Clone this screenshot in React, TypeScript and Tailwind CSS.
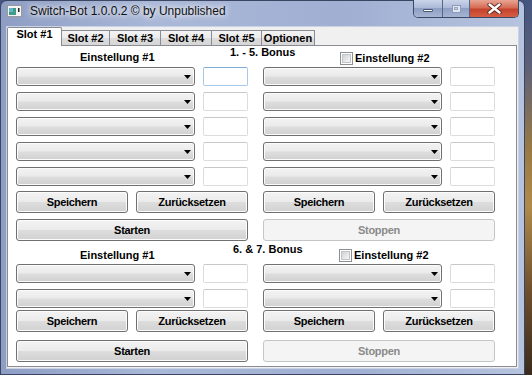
import React from "react";

const F = "font-['Liberation_Sans',Arial,sans-serif]";

function AppIcon() {
  return (
    <svg width="15" height="12" viewBox="0 0 15 12" className="ml-[6px] mt-[4px] shrink-0">
      <rect x="0.5" y="0.5" width="14" height="11" fill="#f4f4f4" stroke="#9a9a9a" />
      <rect x="2" y="3" width="7" height="7" fill="#3f9a8a" />
      <rect x="2" y="3" width="4" height="4" fill="#5fb9c4" />
      <rect x="11" y="3" width="1.5" height="4" fill="#222" />
    </svg>
  );
}

function CaptionButtons() {
  return (
    <div className="-mt-px ml-auto mr-[5px] flex h-[18px] overflow-hidden rounded-b-[5px] border border-t-0 border-[#3b4868]">
      <div className="flex w-[29px] items-center justify-center border-r border-[#56658a] bg-[linear-gradient(#c9d4e8,#a9b7d6_50%,#8f9fc4_50%,#a7b5d4)]">
        <span className="mt-[3px] h-[3px] w-[10px] rounded-[1px] border border-[#4a5676] bg-white" />
      </div>
      <div className="flex w-[27px] items-center justify-center border-r border-[#56658a] bg-[linear-gradient(#c9d4e8,#a9b7d6_50%,#8f9fc4_50%,#a7b5d4)]">
        <span className="flex h-[8px] w-[9px] items-center justify-center border border-[#8e9bb8] bg-[#dfe5f1]">
          <span className="h-[3px] w-[4px] border border-[#9aa6c0] bg-[#c5cfe3]" />
        </span>
      </div>
      <div className="flex w-[48px] items-center justify-center bg-[linear-gradient(#e8a593,#d66c55_45%,#c4432b_55%,#d65d43)]">
        <svg width="15" height="11" viewBox="0 0 15 11">
          <path d="M2.5 1.5L12.5 9.5M12.5 1.5L2.5 9.5" stroke="#5a2a22" strokeWidth="4.2" strokeLinecap="round" />
          <path d="M2.5 1.5L12.5 9.5M12.5 1.5L2.5 9.5" stroke="#ffffff" strokeWidth="2.4" strokeLinecap="round" />
        </svg>
      </div>
    </div>
  );
}

function Combo() {
  return (
    <div className="flex h-[19px] w-[179px] items-center justify-end rounded-[3px] border border-[#707070] bg-[linear-gradient(#f3f3f3,#ebebeb_45%,#dddddd_55%,#d0d0d0)] pr-[3px] shadow-[inset_0_0_0_1px_#fbfbfb]">
      <svg width="7" height="4" viewBox="0 0 7 4">
        <path d="M0 0H7L3.5 4Z" fill="#000" />
      </svg>
    </div>
  );
}

function Field({ active }: { active?: boolean }) {
  return (
    <div
      className={
        active
          ? "h-[19px] w-[45px] rounded-[2px] border border-[#a9c9ea] border-t-[#7eacd8] bg-white"
          : "h-[19px] w-[45px] rounded-[2px] border border-[#dcdcdc] border-t-[#c8c8c8] bg-white"
      }
    />
  );
}

function Btn({ label, wide, off }: { label: string; wide?: boolean; off?: boolean }) {
  const w = wide ? "w-[232px]" : "w-[112px]";
  return off ? (
    <div className={`${w} flex h-[22px] items-center justify-center rounded-[3px] border border-[#c3c6c9] bg-[#f4f4f4] text-[11px] font-bold tracking-[-0.3px] text-[#8a8a8a]`}>
      {label}
    </div>
  ) : (
    <div className={`${w} flex h-[22px] items-center justify-center rounded-[3px] border border-[#707070] bg-[linear-gradient(#f3f3f3,#ebebeb_48%,#dddddd_52%,#d1d1d1)] text-[11px] font-bold tracking-[-0.3px] text-black shadow-[inset_0_0_0_1px_#fcfcfc]`}>
      {label}
    </div>
  );
}

function Check() {
  return (
    <span className="flex h-[13px] w-[13px] shrink-0 items-center justify-center border border-[#8e8f8f] bg-white">
      <span className="h-[9px] w-[9px] border border-[#c2c5c9] bg-[linear-gradient(135deg,#cfd2d6,#f7f7f7)]" />
    </span>
  );
}

function Rows({ count }: { count: number }) {
  const items = Array.from({ length: count });
  return (
    <div className="grid grid-cols-[232px_232px] gap-x-[15px] gap-y-[6px] pl-[8px]">
      {items.map((_, i) => (
        <React.Fragment key={i}>
          <div className="flex gap-[8px]">
            <Combo />
            <Field active={count === 5 && i === 0} />
          </div>
          <div className="flex gap-[8px]">
            <Combo />
            <Field />
          </div>
        </React.Fragment>
      ))}
    </div>
  );
}

function SaveRow({ className }: { className: string }) {
  return (
    <div className={`grid grid-cols-[232px_232px] gap-x-[15px] pl-[8px] ${className}`}>
      <div className="flex gap-[8px]">
        <Btn label="Speichern" />
        <Btn label="Zurücksetzen" />
      </div>
      <div className="flex gap-[8px]">
        <Btn label="Speichern" />
        <Btn label="Zurücksetzen" />
      </div>
    </div>
  );
}

function StartRow({ className }: { className: string }) {
  return (
    <div className={`grid grid-cols-[232px_232px] gap-x-[15px] pl-[8px] ${className}`}>
      <Btn label="Starten" wide />
      <Btn label="Stoppen" wide off />
    </div>
  );
}

const tabs = [
  { label: "Slot #2", cls: "w-[48px]" },
  { label: "Slot #3", cls: "w-[51px]" },
  { label: "Slot #4", cls: "w-[51px]" },
  { label: "Slot #5", cls: "w-[50px]" },
  { label: "Optionen", cls: "w-[53px]" },
];

export default function App() {
  return (
    <div className={`flex h-[375px] w-[532px] overflow-hidden bg-[linear-gradient(#44557f,#5d6078_18%,#9a7a43_40%,#b08a4a_55%,#6e4e2c_78%,#3b2b1d)] ${F}`}>
      <div className="flex h-[375px] w-[525px] shrink-0 flex-col rounded-t-[7px] border border-[#3a4562] bg-[linear-gradient(90deg,#8e9dc4,#aab8d8_30%,#a0afd2_65%,#b6c3de)]">
        <div className="flex h-[26px] shrink-0 items-start">
          <AppIcon />
          <span className="ml-[8px] mt-[3px] text-[12px] leading-[14px] text-[#111] [text-shadow:0_0_5px_#ffffff,0_0_8px_#ffffff]">
            Switch-Bot 1.0.0.2 © by Unpublished
          </span>
          <CaptionButtons />
        </div>
        <div className="mx-[6px] mb-[6px] flex flex-1 flex-col bg-[#f0f0f0] pb-px pr-px shadow-[0_0_0_1px_#c9d1e3]">
          <div className="flex h-[18px] shrink-0 items-end">
            <div className="relative z-10 -mb-px h-[19px] w-[55px] rounded-t-[2px] border border-b-0 border-[#898c95] bg-white pt-[1px] text-center text-[11px] font-bold leading-[11px] text-black">
              Slot #1
            </div>
            {tabs.map((t) => (
              <div
                key={t.label}
                className={`${t.cls} h-[15px] border-r border-t border-[#898c95] bg-[linear-gradient(#f3f3f3,#ebebeb_50%,#dddddd_50%,#d6d6d6)] pt-[2px] text-center text-[11px] font-bold leading-[11px] text-black`}
              >
                {t.label}
              </div>
            ))}
          </div>
          <div className="flex flex-1 flex-col border border-[#898c95] bg-white text-[11px] font-bold leading-[13px] text-black">
            <div className="flex h-[21px] shrink-0 items-start pl-[72px]">
              <span className="mt-[5px] w-[150px]">Einstellung #1</span>
              <span className="w-[110px]">1. - 5. Bonus</span>
              <span className="mt-[6px] flex items-center gap-[2px]">
                <Check />
                <span>Einstellung #2</span>
              </span>
            </div>
            <Rows count={5} />
            <SaveRow className="mt-[5px]" />
            <StartRow className="mt-[6px]" />
            <div className="flex h-[23px] shrink-0 items-start pl-[72px]">
              <span className="mt-[8px] w-[153px]">Einstellung #1</span>
              <span className="mt-[2px] w-[106px]">6. &amp; 7. Bonus</span>
              <span className="mt-[8px] flex items-center gap-[2px]">
                <Check />
                <span>Einstellung #2</span>
              </span>
            </div>
            <Rows count={2} />
            <SaveRow className="mt-[2px]" />
            <StartRow className="mt-[8px]" />
          </div>
        </div>
      </div>
      <div className="flex-1" />
    </div>
  );
}
